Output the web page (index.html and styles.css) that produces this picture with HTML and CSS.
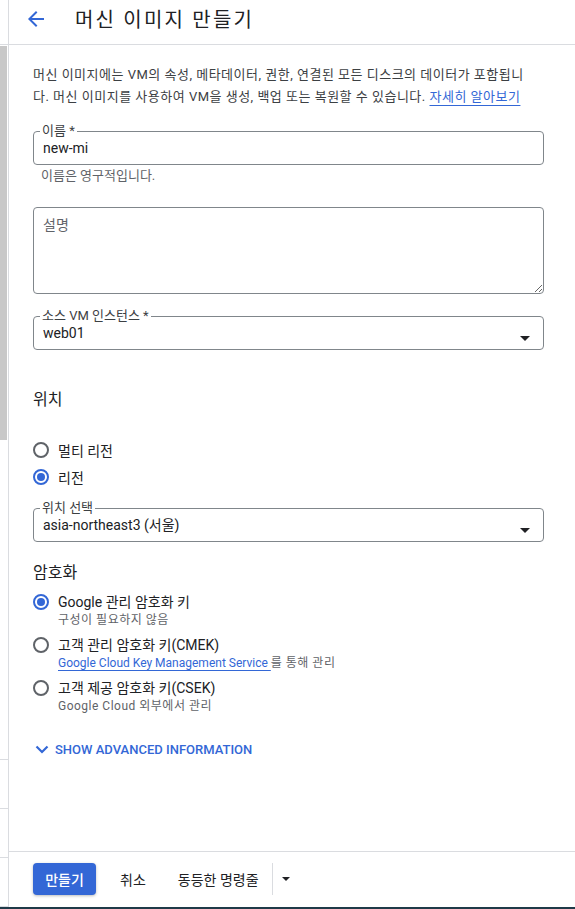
FILE: index.html
```html
<!DOCTYPE html>
<html lang="ko">
<head>
<meta charset="utf-8">
<title>머신 이미지 만들기</title>
<link rel="stylesheet" href="styles.css">
</head>
<body>
<div class="frame">
  <aside class="side">
    <div class="side-top"></div>
    <div class="side-thumb"></div>
    <div class="side-gap1"></div>
    <div class="side-row"></div>
    <div class="side-row"></div>
    <div class="side-row last"></div>
  </aside>
  <main class="panel">
    <header class="head">
      <svg class="back" width="24" height="24" viewBox="0 0 24 24"><path d="M20 11H7.83l5.59-5.59L12 4l-8 8 8 8 1.41-1.41L7.83 13H20v-2z" fill="#3367d6"/></svg>
      <h1 class="title">머신 이미지 만들기</h1>
    </header>
    <section class="content">
      <p class="intro">머신 이미지에는 VM의 속성, 메타데이터, 권한, 연결된 모든 디스크의 데이터가 포함됩니다. 머신 이미지를 사용하여 VM을 생성, 백업 또는 복원할 수 있습니다. <a class="link" href="#">자세히 알아보기</a></p>

      <fieldset class="field">
        <legend class="legend">이름 *</legend>
        <div class="value">new-mi</div>
      </fieldset>
      <div class="hint">이름은 영구적입니다.</div>

      <textarea class="desc" placeholder="설명"></textarea>

      <fieldset class="field select-field">
        <legend class="legend">소스 VM 인스턴스 *</legend>
        <div class="value">web01</div>
        <svg class="caret" width="10" height="5" viewBox="0 0 10 5"><path d="M0 0l5 5 5-5z" fill="#202124"/></svg>
      </fieldset>

      <h2 class="section">위치</h2>
      <div class="radios">
        <div class="radio-row"><span class="radio"></span><span>멀티 리전</span></div>
        <div class="radio-row"><span class="radio on"></span><span>리전</span></div>
      </div>

      <fieldset class="field select-field loc">
        <legend class="legend">위치 선택</legend>
        <div class="value">asia-northeast3 (서울)</div>
        <svg class="caret" width="10" height="5" viewBox="0 0 10 5"><path d="M0 0l5 5 5-5z" fill="#202124"/></svg>
      </fieldset>

      <h2 class="section enc">암호화</h2>
      <div class="options">
        <div class="opt">
          <span class="radio on"></span>
          <div class="opt-text">
            <div class="opt-title">Google 관리 암호화 키</div>
            <div class="opt-sub">구성이 필요하지 않음</div>
          </div>
        </div>
        <div class="opt">
          <span class="radio"></span>
          <div class="opt-text">
            <div class="opt-title">고객 관리 암호화 키(CMEK)</div>
            <div class="opt-sub"><a class="link plain" href="#">Google Cloud Key Management Service </a>를 통해 관리</div>
          </div>
        </div>
        <div class="opt">
          <span class="radio"></span>
          <div class="opt-text">
            <div class="opt-title">고객 제공 암호화 키(CSEK)</div>
            <div class="opt-sub">Google Cloud 외부에서 관리</div>
          </div>
        </div>
      </div>

      <div class="advanced">
        <svg width="14" height="9" viewBox="0 0 14 9"><path d="M1.5 1.5l5.5 5.5 5.5-5.5" fill="none" stroke="#3367d6" stroke-width="2.2"/></svg>
        <span>SHOW ADVANCED INFORMATION</span>
      </div>
    </section>
    <footer class="foot">
      <button class="btn-primary">만들기</button>
      <button class="btn-text cancel">취소</button>
      <button class="btn-text equiv">동등한 명령줄</button>
      <span class="divider"></span>
      <svg class="foot-caret" width="8" height="4" viewBox="0 0 8 4"><path d="M0 0l4 4 4-4z" fill="#202124"/></svg>
    </footer>
  </main>
</div>
<div class="bottom-bar"></div>
</body>
</html>
```

FILE: styles.css
```css
* { box-sizing: border-box; }
html, body { margin: 0; padding: 0; }
body {
  width: 575px;
  height: 909px;
  overflow: hidden;
  font-family: Roboto, "Noto Sans CJK KR", sans-serif;
  color: #202124;
  background: #fff;
}
.frame { display: flex; height: 907px; }
.bottom-bar { height: 2px; background: #1f3a48; }

.side {
  width: 9px;
  flex: none;
  border-right: 1px solid #dadce0;
  display: flex;
  flex-direction: column;
}
.side-top { height: 45px; border-bottom: 1px solid #dadce0; margin-right: -1px; }
.side-thumb { height: 394px; width: 7px; background: #c8c8c8; margin-top: 1px; }
.side-gap1 { height: 320px; border-bottom: 1px solid #dadce0; }
.side-row { height: 49px; border-bottom: 1px solid #dadce0; }

.panel { flex: 1; display: flex; flex-direction: column; min-width: 0; }

.head {
  height: 45px;
  border-bottom: 1px solid #dadce0;
  display: flex;
  align-items: center;
  padding-left: 15px;
  flex: none;
}
.back { display: block; margin-top: -7px; }
.title {
  margin: -7px 0 0 27px;
  font-size: 20px;
  font-weight: 400;
  letter-spacing: 2.2px;
  color: #202124;
}

.content { flex: 1; padding: 19px 31px 0 24px; }

.intro {
  margin: 0;
  font-size: 13px;
  line-height: 22px;
  color: #3c4043;
  letter-spacing: 0.5px;
  width: 500px;
}
.link {
  color: #3367d6;
  text-decoration: underline;
  text-decoration-color: #3367d6;
  text-underline-offset: 4px;
}
.link.plain { letter-spacing: 0; }

.field {
  margin: 16px 0 0;
  border: 1px solid #80868b;
  border-radius: 4px;
  padding: 0 9px 6px;
  min-width: 0;
  position: relative;
}
.legend {
  font-size: 13px;
  line-height: 14px;
  padding: 0 2px;
  margin-left: -3px;
  color: #3c4043;
}
.value { font-size: 14px; line-height: 20px; margin-top: 0; color: #202124; }
.hint { font-size: 13px; line-height: 16px; color: #5f6368; margin: 3px 0 0 8px; }

.desc {
  display: block;
  width: 100%;
  height: 87px;
  margin-top: 23px;
  border: 1px solid #80868b;
  border-radius: 4px;
  padding: 8px 9px;
  font-family: Roboto, "Noto Sans CJK KR", sans-serif;
  font-size: 14px;
  line-height: 18px;
  resize: vertical;
}
.desc::placeholder { color: #5f6368; }

.select-field { margin-top: 15px; display: block; }
.select-field .value { padding-right: 30px; }
.caret { position: absolute; right: 13px; top: 13px; }
.loc { margin-top: 11px; }

.section {
  margin: 38px 0 0;
  font-size: 16px;
  line-height: 24px;
  font-weight: 400;
  color: #202124;
}
.section.enc { margin-top: 19px; }

.radios { margin-top: 24px; }
.radio-row {
  display: flex;
  align-items: center;
  height: 27px;
  font-size: 14px;
}
.radio {
  width: 16px;
  height: 16px;
  border: 2px solid #5f6368;
  border-radius: 50%;
  flex: none;
  margin-right: 9px;
  position: relative;
}
.radio.on { border-color: #3367d6; }
.radio.on::after {
  content: "";
  position: absolute;
  left: 2px; top: 2px;
  width: 8px; height: 8px;
  border-radius: 50%;
  background: #3367d6;
}

.options { margin-top: 7px; display: flex; flex-direction: column; gap: 7px; }
.opt { display: flex; align-items: flex-start; }
.opt .radio { margin-top: 2px; }
.opt-title { font-size: 14px; line-height: 20px; }
.opt-sub { font-size: 12px; line-height: 16px; color: #5f6368; letter-spacing: 0.5px; }
.opt-sub .link { text-underline-offset: 3px; }

.advanced {
  margin-top: 25px;
  display: flex;
  align-items: center;
  height: 20px;
  font-size: 13px;
  font-weight: 500;
  color: #3367d6;
}
.advanced svg { margin: 0 6px 0 2px; }

.foot {
  flex: none;
  height: 56px;
  border-top: 1px solid #dadce0;
  display: flex;
  align-items: center;
  padding: 0 0 1px 24px;
}
.foot button {
  font-family: Roboto, "Noto Sans CJK KR", sans-serif;
  font-size: 14px;
  border: 0;
  background: none;
  padding: 0;
  cursor: pointer;
}
.btn-primary {
  width: 63px;
  height: 32px;
  border-radius: 4px;
  background: #3367d6 !important;
  color: #fff;
  font-weight: 500;
  box-shadow: 0 1px 3px rgba(60,64,67,0.35);
}
.btn-text { color: #202124; height: 32px; }
.cancel { margin-left: 24px; }
.equiv { margin-left: 32px; }
.divider { width: 1px; height: 32px; background: #dadce0; margin-left: 13px; }
.foot-caret { margin-left: 9px; }
```
